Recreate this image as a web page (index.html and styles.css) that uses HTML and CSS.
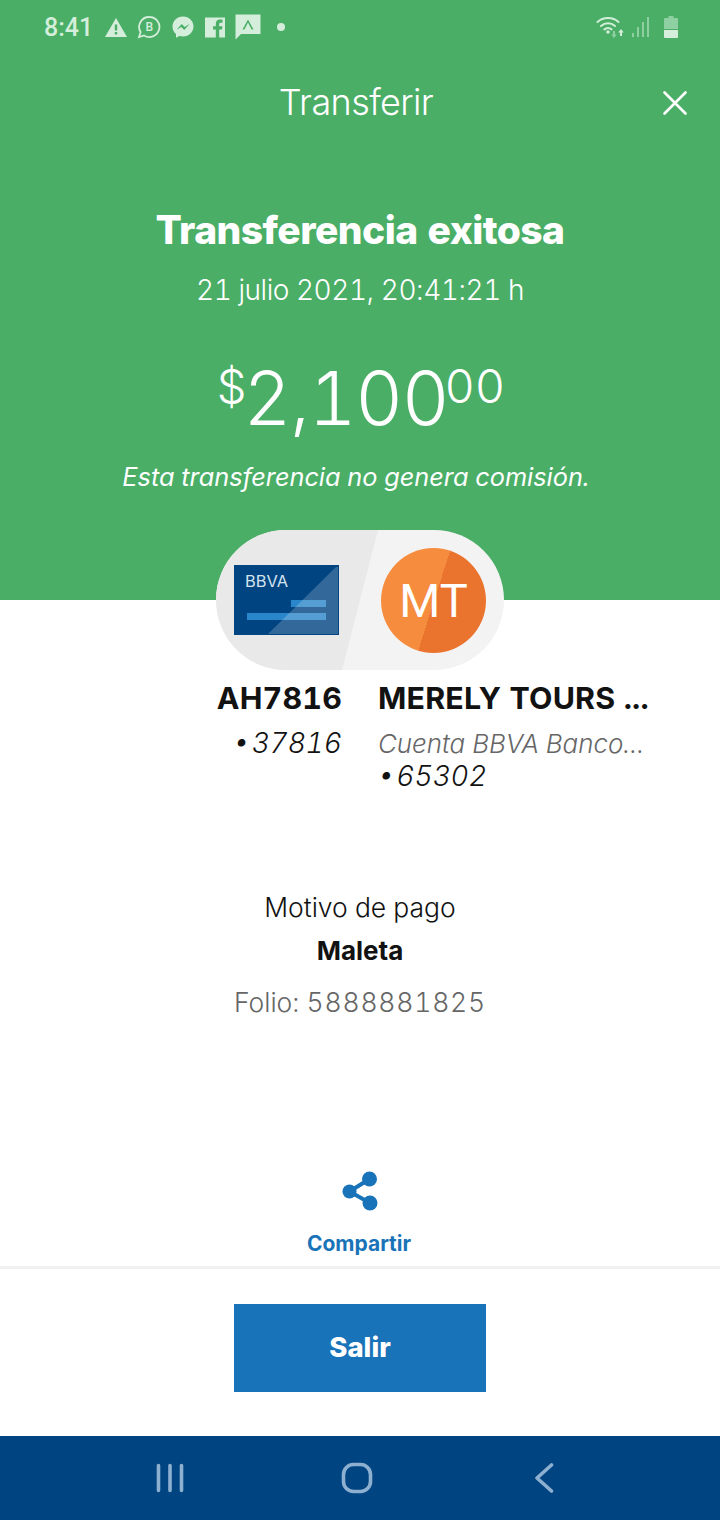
FILE: index.html
```html
<!DOCTYPE html>
<html lang="es">

<head>
    <meta charset="UTF-8">
    <meta name="viewport" content="width=device-width, initial-scale=1.0">
    <title>Transferir</title>
    <link rel="stylesheet" href="styles.css">
</head>

<body>

    <div class="screen">

        <!-- Green header -->
        <div class="hero">
            <div class="status-bar">
                <span class="clock">8:41</span>
                <svg class="st-icon" width="24" height="24" viewBox="0 0 24 24"><path class="light" fill-rule="evenodd" d="M12 3 L23 22 H1 Z M10.8 9.5 V15.5 H13.2 V9.5 Z M10.8 17 V19.4 H13.2 V17 Z"/></svg>
                <svg class="st-icon" width="24" height="24" viewBox="0 0 24 24"><path class="line" d="M12.5 2 A10 10 0 1 1 7 20.4 L2 22 L3.6 17.2 A10 10 0 0 1 12.5 2 Z"/><text x="12.4" y="16.4" class="b-letter">B</text></svg>
                <svg class="st-icon st-msg" width="24" height="24" viewBox="0 0 24 24"><path class="light" fill-rule="evenodd" d="M12 1.5 C5.8 1.5 1.5 6 1.5 11.6 C1.5 14.7 2.8 17.3 5 19 V22.8 L8.6 20.9 C9.6 21.2 10.8 21.4 12 21.4 C18.2 21.4 22.5 17 22.5 11.5 C22.5 6 18.2 1.5 12 1.5 Z M5.5 14.8 L10.8 9 L13.6 11.9 L18.6 9 L13.2 14.9 L10.4 12 Z"/></svg>
                <svg class="st-icon" width="22" height="24" viewBox="0 0 22 24"><path class="light" d="M1 2.5 H21 V22.5 H15.2 V14.6 H18 L18.4 11.2 H15.2 V9.3 C15.2 8.3 15.5 7.7 16.8 7.7 H18.5 V4.7 C18.2 4.7 17.2 4.6 16 4.6 C13.5 4.6 11.8 6.1 11.8 8.9 V11.2 H9 V14.6 H11.8 V22.5 H1 Z"/></svg>
                <svg class="st-icon" width="26" height="26" viewBox="0 0 26 26"><path class="light" fill-rule="evenodd" d="M0.5 0.5 H25.5 V20 H6 L0.5 25.5 Z M13 5.5 L7.5 15.5 H9.4 L13 8.6 L16.6 15.5 H18.5 Z"/></svg>
                <span class="st-dot"></span>
                <span class="st-spacer"></span>
                <svg class="st-icon wifi" width="28" height="24" viewBox="0 0 28 24"><path class="wifi-arc" d="M1.5 7 C7 1.6 17 1.6 22.5 7 M5 11 C9 7.4 15 7.4 19 11 M8.4 14.4 C10.6 12.8 13.4 12.8 15.6 14.4"/><circle class="light" cx="12" cy="17" r="1.8"/><path class="dim" d="M17 16 H19 V19.5 H20.8 L18 23 L15.2 19.5 H17 Z"/><path class="light" d="M25 20 H27 V16.5 H28.8 L26 13 L23.2 16.5 H25 Z" transform="translate(-1 1)"/></svg>
                <svg class="st-icon signal" width="20" height="22" viewBox="0 0 20 22"><path class="dim" d="M1 17 H3 V21 H1 Z M6 11 H8 V21 H6 Z M11 6 H13 V21 H11 Z M16 1 H18 V21 H16 Z"/></svg>
                <svg class="st-icon battery" width="14" height="22" viewBox="0 0 14 22"><path class="dim" d="M4.5 0 H9.5 V2 H13 Q14 2 14 3 V13 H0 V3 Q0 2 1 2 H4.5 Z"/><path class="light" d="M0 14 H14 V21 Q14 22 13 22 H1 Q0 22 0 21 Z"/></svg>
            </div>

            <div class="nav-bar">
                <h1 class="nav-title">Transferir</h1>
                <svg class="close-btn" width="24" height="24" viewBox="0 0 24 24"><path d="M1.5 1.5 L22.5 22.5 M22.5 1.5 L1.5 22.5"/></svg>
            </div>

            <h2 class="result-title">Transferencia exitosa</h2>
            <p class="result-date">21 julio 2021, 20:41:21 h</p>
            <p class="amount"><span class="amount-sup amount-currency">$</span>2,100<span class="amount-sup amount-cents">00</span></p>
            <p class="fee-note">Esta transferencia no genera comisión.</p>
        </div>

        <!-- Origin and destination -->
        <div class="pill">
            <svg class="bbva-card" width="105" height="70" viewBox="0 0 105 70">
                <rect width="105" height="70" fill="#004481"/>
                <rect x="57" y="35" width="35" height="7" fill="#2a86ca"/>
                <rect x="13" y="48" width="79" height="7" fill="#2a86ca"/>
                <path d="M34 69 L102 2 L104 2 V69 Z" fill="#fff" fill-opacity="0.2"/>
                <text x="11" y="22" class="bbva-text" textLength="43" lengthAdjust="spacingAndGlyphs">BBVA</text>
            </svg>
            <div class="avatar">MT</div>
        </div>

        <div class="parties">
            <div class="party party-from">
                <div class="party-name">AH7816</div>
                <div class="party-acc">• 37816</div>
            </div>
            <div class="party">
                <div class="party-name">MERELY TOURS ...</div>
                <div class="party-bank">Cuenta BBVA Banco...</div>
                <div class="party-acc">• 65302</div>
            </div>
        </div>

        <div class="details">
            <p class="detail-label">Motivo de pago</p>
            <p class="detail-value">Maleta</p>
            <p class="detail-folio">Folio: <span class="folio-num">5888881825</span></p>
        </div>

        <div class="share">
            <svg width="36" height="40" viewBox="0 0 36 40"><circle cx="7.5" cy="20.5" r="7"/><circle cx="27.5" cy="8" r="7.5"/><circle cx="28" cy="32" r="7.5"/><path d="M7.5 20.5 L27.5 8 M7.5 20.5 L28 32" class="share-line"/></svg>
            <span class="share-label">Compartir</span>
        </div>

        <div class="footer">
            <button class="exit-btn">Salir</button>
        </div>

        <!-- Android navigation -->
        <div class="android-nav">
            <svg width="30" height="30" viewBox="0 0 30 30"><path d="M3.5 2.5 V27.5 M15 2.5 V27.5 M26.5 2.5 V27.5"/></svg>
            <svg class="nav-home" width="32" height="32" viewBox="0 0 32 32"><rect x="2.5" y="2.5" width="27" height="27" rx="10"/></svg>
            <svg class="nav-back" width="20" height="30" viewBox="0 0 20 30"><path d="M17.5 2 L3 15 L17.5 28"/></svg>
        </div>

    </div>

</body>

</html>
```

FILE: styles.css
```css
body {
    margin: 0;
    font-family: Inter, Roboto, Arial, sans-serif;
    font-variant-numeric: tabular-nums;
    background-color: #fff;
    color: #121212;
}

p,
h1,
h2 {
    margin: 0;
    font-weight: normal;
}

.screen {
    width: 720px;
    height: 1520px;
    display: flex;
    flex-direction: column;
    overflow: hidden;
}

.hero {
    height: 600px;
    flex-shrink: 0;
    background-color: #4aae66;
    color: #fff;
    text-align: center;
}

.status-bar {
    height: 54px;
    display: flex;
    align-items: center;
    gap: 9px;
    padding: 0 42px 0 44px;
}

.clock {
    font-family: Roboto, sans-serif;
    font-size: 25px;
    font-weight: 500;
    color: #d4eedb;
    margin-right: 2px;
}

.st-icon {
    flex-shrink: 0;
}

.st-msg {
    margin-left: 1px;
}

.light {
    fill: #d4eedb;
}

.dim {
    fill: #8fd0a2;
}

.line {
    fill: none;
    stroke: #d4eedb;
    stroke-width: 1.8;
}

.wifi-arc {
    fill: none;
    stroke: #d4eedb;
    stroke-width: 2;
    stroke-linecap: round;
}

.b-letter {
    font-family: Roboto, sans-serif;
    font-size: 12px;
    font-weight: 500;
    fill: #d4eedb;
    text-anchor: middle;
}

.st-dot {
    width: 8px;
    height: 8px;
    border-radius: 50%;
    background-color: #d4eedb;
    margin-left: 7px;
}

.st-spacer {
    flex: 1;
}

.signal {
    margin-left: -2px;
}

.battery {
    margin-left: 4px;
}

.nav-bar {
    height: 96px;
    display: flex;
    align-items: center;
    justify-content: center;
    position: relative;
}

.nav-title {
    font-size: 36px;
    font-weight: 300;
    letter-spacing: -0.6px;
    margin-right: 8px;
}

.close-btn {
    position: absolute;
    right: 33px;
    top: 37px;
    fill: none;
    stroke: #fff;
    stroke-width: 2.6;
    stroke-linecap: round;
}

.result-title {
    margin-top: 56px;
    font-size: 39px;
    font-weight: 800;
    letter-spacing: -0.55px;
}

.result-date {
    margin-top: 20px;
    font-size: 28px;
    font-weight: 300;
    letter-spacing: -0.45px;
}

.amount {
    margin-top: 47px;
    padding-left: 2px;
    font-size: 74px;
    font-weight: 300;
    line-height: 88px;
    letter-spacing: -1.3px;
}

.amount-sup {
    font-size: 47px;
    vertical-align: 22px;
    line-height: 0;
    letter-spacing: 0;
}

.amount-currency {
    margin-right: -3px;
}

.amount-cents {
    margin-left: -4px;
}

.fee-note {
    margin-top: 19px;
    padding-right: 8px;
    font-size: 25.3px;
    font-weight: 400;
    font-style: italic;
}

.pill {
    width: 288px;
    height: 140px;
    margin: -70px auto 0;
    flex-shrink: 0;
    box-sizing: border-box;
    padding: 0 18px;
    border-radius: 70px;
    background-color: #f3f3f3;
    display: flex;
    align-items: center;
    justify-content: space-between;
    position: relative;
    overflow: hidden;
}

.pill::before {
    content: "";
    position: absolute;
    inset: 0;
    background-color: #e9e9e9;
    clip-path: polygon(0 0, 162px 0, 126px 100%, 0 100%);
}

.bbva-card {
    position: relative;
}

.bbva-text {
    font-size: 16px;
    font-weight: 400;
    fill: #d5e3f0;
}

.avatar {
    width: 105px;
    height: 105px;
    border-radius: 50%;
    background: linear-gradient(107.7deg, #f68c3e 0 50.5%, #ea732e 50.5%);
    color: #fff;
    font-family: Roboto, sans-serif;
    font-size: 47px;
    font-weight: 400;
    display: flex;
    align-items: center;
    justify-content: center;
    position: relative;
}

.parties {
    display: grid;
    grid-template-columns: 342px 1fr;
    column-gap: 36px;
    margin-top: 9px;
}

.party-from {
    text-align: right;
}

.party-name {
    font-size: 30.4px;
    font-weight: 700;
    line-height: 38px;
    letter-spacing: 0.2px;
}

.party-acc {
    font-size: 28px;
    font-style: italic;
    font-weight: 300;
    line-height: 33px;
    word-spacing: -5px;
}

.party-bank {
    font-size: 25.9px;
    font-style: italic;
    font-weight: 300;
    color: #666;
    line-height: 33px;
}

.party-name + .party-acc,
.party-name + .party-bank {
    margin-top: 10px;
}

.details {
    margin-top: 96px;
    text-align: center;
}

.detail-label {
    font-size: 26.5px;
    font-weight: 300;
    line-height: 36px;
}

.detail-value {
    margin-top: 8px;
    font-size: 26px;
    font-weight: 700;
    line-height: 36px;
}

.detail-folio {
    margin-top: 15px;
    font-size: 26.5px;
    font-weight: 300;
    color: #666;
    line-height: 36px;
}

.folio-num {
    letter-spacing: 0.8px;
}

.share {
    margin-top: auto;
    display: flex;
    flex-direction: column;
    align-items: center;
    gap: 20px;
    padding-bottom: 10px;
}

.share svg {
    fill: #1973b8;
    stroke: none;
}

.share-line {
    fill: none;
    stroke: #1973b8;
    stroke-width: 4;
}

.share-label {
    font-size: 21px;
    font-weight: 700;
    color: #1973b8;
    margin-right: 2px;
}

.footer {
    height: 170px;
    box-sizing: border-box;
    flex-shrink: 0;
    display: flex;
    justify-content: center;
    padding-top: 35px;
    border-top: 3px solid #f0f0f0;
}

.exit-btn {
    width: 252px;
    height: 88px;
    border: none;
    padding-bottom: 4px;
    background-color: #1973b8;
    color: #fff;
    font-family: inherit;
    font-size: 27.5px;
    font-weight: 800;
}

.android-nav {
    height: 84px;
    flex-shrink: 0;
    background-color: #004481;
    display: flex;
    align-items: center;
    padding-left: 155px;
}

.nav-home {
    margin-left: 156px;
}

.nav-back {
    margin-left: 161px;
}

.android-nav svg {
    fill: none;
    stroke: #8eb0d0;
    stroke-width: 3.6;
    stroke-linecap: round;
    stroke-linejoin: round;
}
```
